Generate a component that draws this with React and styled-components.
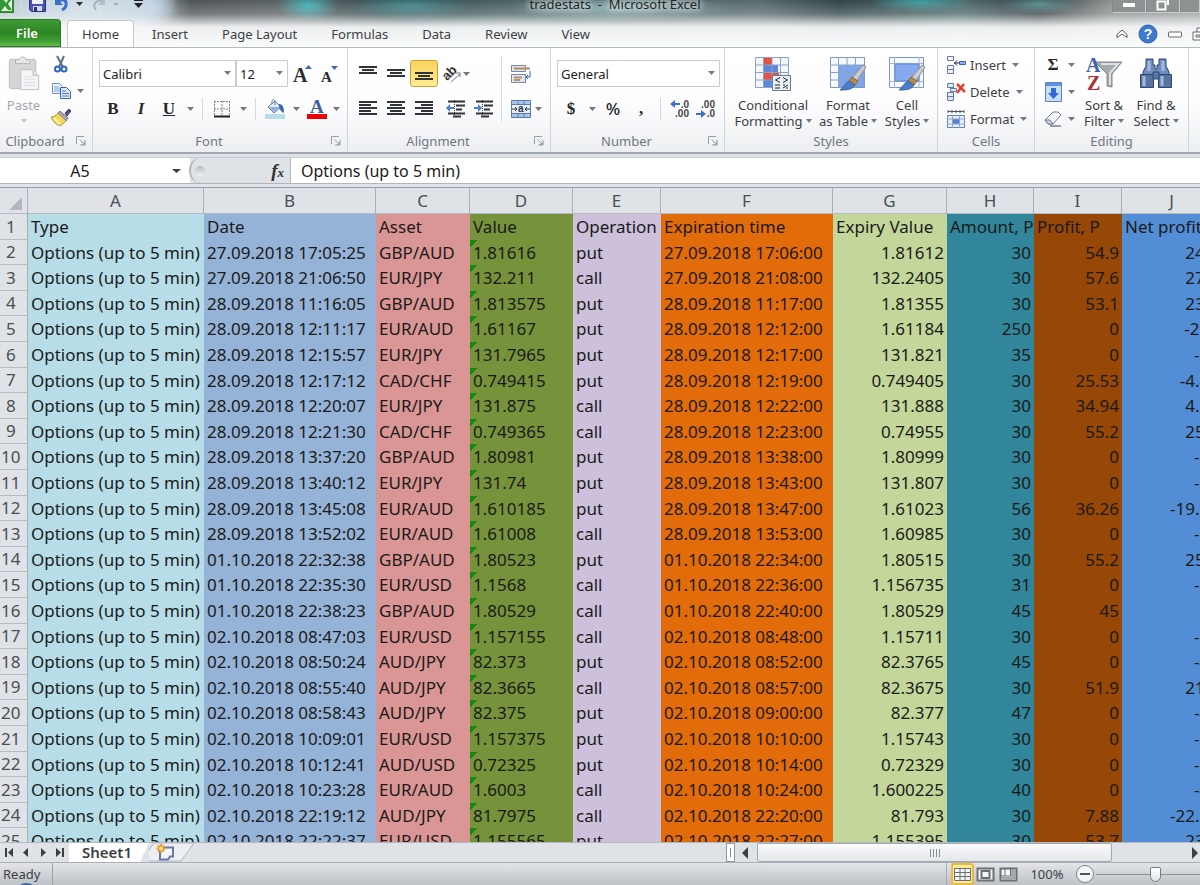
import React from 'react';
import styled, { createGlobalStyle, css } from 'styled-components';

const UiFont = '"Noto Sans", "Open Sans", sans-serif';
const CellFont = '"Noto Sans", "Open Sans", sans-serif';
const SerifFont = '"Liberation Serif", serif';
const LabelColor = '#6f7680';
const TextColor = '#3c3f44';

const GlobalStyle = createGlobalStyle`
  * {
    box-sizing: border-box;
  }
  body {
    margin: 0;
    overflow: hidden;
    background: #dfe2e7;
    font-family: ${UiFont};
    font-size: 13px;
    color: ${TextColor};
  }
  button, input, select {
    font: inherit;
    color: inherit;
    margin: 0;
    padding: 0;
    border: 0;
    background: none;
  }
  svg {
    display: block;
    flex: none;
  }
`

const Window = styled.div`
  display: flex;
  flex-direction: column;
  height: 100vh;
  overflow: hidden;
`

/* ---------- title bar and tabs ---------- */

const Header = styled.header`
  flex: none;
  overflow: hidden;
  border-bottom: 1px solid #b4b9c0;
  background:
    linear-gradient(180deg, rgba(255,255,255,0) 0, rgba(240,242,243,0.25) 14px, rgba(246,247,248,0.94) 27px, #fafbfb 47px),
    radial-gradient(ellipse 90px 40px at 90px 8px, #d3e0e8 0, rgba(200,215,226,0.8) 60%, rgba(200,215,226,0) 100%),
    radial-gradient(ellipse 26px 22px at 150px 6px, #b9d2ee 0, rgba(185,210,238,0) 100%),
    radial-gradient(ellipse 30px 16px at 308px 6px, #3fb0b4 0, rgba(63,176,180,0) 100%),
    radial-gradient(ellipse 60px 14px at 410px 6px, #3f8489 0, rgba(63,132,137,0) 100%),
    radial-gradient(ellipse 110px 14px at 620px 8px, #7fa6a8 0, rgba(127,166,168,0) 100%),
    radial-gradient(ellipse 50px 10px at 920px 2px, #3c9a9f 0, rgba(60,154,159,0) 100%),
    radial-gradient(ellipse 40px 10px at 1040px 4px, #52898c 0, rgba(82,137,140,0) 100%),
    linear-gradient(90deg, #bccad3 0, #b7c6d0 140px, #4d5355 190px, #5b6264 290px, #31494c 400px, #4b6466 520px, #57696b 760px, #2f4245 840px, #4d6a6c 960px, #353e40 1040px, #8b8f90 1110px, #9ea2a3 100%);
`

const TitleBar = styled.div`
  display: flex;
  align-items: center;
  height: 34px;
  margin-top: -14px;
  padding-top: 2px;
`

const QuickAccess = styled.div`
  display: flex;
  flex: 1;
  align-items: center;
  gap: 7px;
`

const Title = styled.h1`
  margin: 0;
  padding-left: 30px;
  font-size: 13px;
  font-weight: 400;
  white-space: pre;
  color: #1d2527;
  text-shadow: 0 0 6px #fff, 0 0 8px #fff;
`

const WindowButtons = styled.div`
  display: flex;
  flex: 1;
  justify-content: flex-end;
`

const WindowButton = styled.button`
  display: flex;
  align-items: center;
  justify-content: center;
  width: 34px;
  height: 18px;
  border: 1px solid #c9cccd;
  border-left-color: #85898b;
  background: #8c9192;
  &:last-child {
    width: 20px;
  }
`

const TabRow = styled.nav`
  display: flex;
  align-items: flex-end;
  height: 27px;
`

const FileTab = styled.button`
  width: 61px;
  height: 28px;
  margin-right: 6px;
  padding-right: 6px;
  border: 1px solid #2b7a26;
  border-left: 0;
  border-radius: 0 4px 0 0;
  background: linear-gradient(180deg, #3f9a35 0, #2c8523 50%, #3f9f33 80%, #67bb4a 100%);
  color: #fff;
  font-weight: 600;
`

const Tab = styled.button`
  height: 27px;
  padding: 0 17px;
  white-space: nowrap;
  ${({ $active }) => $active && css`
    padding: 0 14px;
    margin-right: 1px;
    border: 1px solid #c6cad0;
    border-bottom: 0;
    border-radius: 4px 4px 0 0;
    background: #fff;
  `}
`

const TabTools = styled.div`
  display: flex;
  align-items: center;
  gap: 10px;
  height: 27px;
  margin-left: auto;
  margin-right: -8px;
`

const PlainButton = styled.button`
  display: flex;
  align-items: center;
  justify-content: center;
`

/* ---------- ribbon ---------- */

const Ribbon = styled.section`
  display: flex;
  flex: none;
  height: 106px;
  border-bottom: 2px solid #a2a8b1;
  background: linear-gradient(180deg, #fff 0, #fdfdfe 55%, #eceef1 100%);
`

const Group = styled.div`
  display: flex;
  flex: none;
  flex-direction: column;
  width: ${({ $width }) => $width}px;
  border-right: 1px solid #d0d4d9;
`

const GroupBody = styled.div`
  display: flex;
  flex: 1;
  min-height: 0;
  padding-top: 8px;
  padding-left: ${({ $pad }) => $pad || 0}px;
`

const GroupFooter = styled.div`
  display: flex;
  flex: none;
  align-items: center;
  height: 22px;
  color: ${LabelColor};
  span {
    flex: 1;
    text-align: center;
  }
  button {
    width: 16px;
    margin-left: 6px;
  }
`

const Stack = styled.div`
  display: flex;
  flex-direction: column;
  margin-top: ${({ $compact }) => $compact ? -5 : 0}px;
`

const ToolRow = styled.div`
  display: flex;
  flex: none;
  align-items: center;
  height: ${({ $height }) => $height || 35}px;
`

const Tool = styled.button`
  display: flex;
  align-items: center;
  justify-content: center;
  width: ${({ $width }) => $width || 28}px;
  height: 27px;
  ${({ $active }) => $active && css`
    border: 1px solid #c9a13b;
    border-radius: 3px;
    background: linear-gradient(180deg, #fbd25e, #fde27c 60%, #ffee93);
  `}
`

const Letter = styled.span`
  font-family: ${({ $sans }) => $sans ? UiFont : SerifFont};
  font-size: 17px;
  font-weight: ${({ $sans }) => $sans ? 500 : 700};
  line-height: 20px;
  color: #26282b;
  font-style: ${({ $italic }) => $italic ? 'italic' : 'normal'};
  text-decoration: ${({ $underline }) => $underline ? 'underline' : 'none'};
`

const Divider = styled.i`
  width: 1px;
  height: ${({ $height }) => $height || 22}px;
  margin: 0 ${({ $gap }) => $gap || 0}px;
  background: #d6dade;
`

const SelectBox = styled.label`
  position: relative;
  width: ${({ $width }) => $width}px;
  svg {
    position: absolute;
    right: 5px;
    top: 11px;
    pointer-events: none;
  }
`

const Select = styled.select`
  appearance: none;
  width: 100%;
  height: 27px;
  padding-left: 3px;
  border: 1px solid #c9cdd2;
  border-radius: 0;
  background: #fff;
  color: #222;
`

const BigButton = styled.button`
  display: flex;
  flex-direction: column;
  align-items: center;
  height: 74px;
  width: ${({ $width }) => $width}px;
  line-height: 16px;
  white-space: nowrap;
  color: ${({ disabled }) => disabled ? '#a5a9ae' : TextColor};
  > svg {
    margin-bottom: 6px;
  }
  span {
    display: flex;
    align-items: center;
    gap: 3px;
    height: 16px;
  }
`

const CellsButton = styled.button`
  display: flex;
  flex: none;
  align-items: center;
  gap: 4px;
  height: 27px;
  svg:last-child {
    margin-left: 2px;
  }
`

/* ---------- formula bar ---------- */

const FormulaBar = styled.div`
  display: flex;
  flex: none;
  height: 27px;
  margin-top: 3px;
  border-top: 1px solid #c9cdd3;
  border-bottom: 1px solid #b1b6bd;
  background: #dfe2e7;
  font-family: ${CellFont};
  font-size: 16px;
  color: #1b1b1b;
`

const NameBox = styled.div`
  display: flex;
  align-items: center;
  width: 190px;
  padding-right: 9px;
  background: #fff;
  input {
    flex: 1;
    min-width: 0;
    text-align: center;
    padding-right: 12px;
  }
`

const FxArea = styled.div`
  display: flex;
  align-items: center;
  justify-content: space-between;
  width: 102px;
  margin-left: -1px;
  padding: 0 6px 0 4px;
  border: 1px solid #b4b8be;
  border-width: 0 1px 0 2px;
  border-radius: 12px 0 0 12px;
  background: #dfe2e7;
  i {
    width: 10px;
    height: 10px;
    border-radius: 5px;
    background: linear-gradient(180deg, #b6bac0, #f1f2f4);
  }
  button {
    font-family: ${SerifFont};
    font-size: 19px;
    font-style: italic;
    font-weight: 700;
    color: #333;
  }
  sub {
    font-size: 13px;
    vertical-align: baseline;
  }
`

const FormulaInput = styled.input`
  flex: 1;
  min-width: 0;
  padding-left: 10px;
  background: #fff;
`

/* ---------- sheet ---------- */

const Sheet = styled.div`
  flex: 1;
  min-height: 0;
  margin-top: 3px;
  overflow: hidden;
  border-top: 1px solid #9aa0a9;
`

const Grid = styled.table`
  width: 1222px;
  table-layout: fixed;
  border-collapse: separate;
  border-spacing: 0;
  font-family: ${CellFont};
  font-size: 17px;
  line-height: 24px;
  color: #1a1a1a;
  th {
    padding: 0;
    overflow: hidden;
    font-weight: 400;
    color: #4b4e53;
    background: #dfe2e7;
    border-right: 1px solid #a9aeb5;
    border-bottom: 1px solid #b6bac1;
  }
`

const Row = styled.tr`
  height: 26px;
  &:nth-child(5n + 2), &:nth-child(5n + 4) {
    height: 25px;
  }
`

const RowHead = styled.th`
  text-align: left;
  text-indent: ${({ $wide }) => $wide ? 1 : 6}px;
`

const Cell = styled.td`
  padding: 0 3px;
  white-space: nowrap;
  text-align: ${({ $align }) => $align};
  background-color: ${({ $color }) => $color};
  ${({ $flag }) => $flag && css`
    background-image: linear-gradient(135deg, #128a12 5px, transparent 5px);
  `}
`

const Corner = styled.th`
  svg {
    margin: 5px 0 0 9px;
  }
`

/* ---------- bottom bars ---------- */

const SheetBar = styled.div`
  display: flex;
  flex: none;
  height: 20px;
  border-top: 1px solid #b3b8bf;
  background: #dfe2e7;
`

const SheetTabs = styled.div`
  display: flex;
  flex: 726;
`

const SheetNav = styled.div`
  display: flex;
  width: 69px;
  button {
    width: 18px;
  }
`

const SheetTab = styled.button`
  width: 80px;
  padding-right: 4px;
  font-size: 15px;
  font-weight: 600;
  line-height: 19px;
  background: #fff;
  clip-path: polygon(0 0, 100% 0, calc(100% - 9px) 100%, 0 100%);
`

const ScrollArea = styled.div`
  display: flex;
  flex: 474;
  align-items: stretch;
`

const Splitter = styled.button`
  width: 9px;
  border: 1px solid #92979e;
  background: #fff;
  &::after {
    content: '';
    display: block;
    width: 1px;
    height: 9px;
    margin: 0 auto;
    background: #888;
  }
`

const ScrollTrack = styled.div`
  display: flex;
  flex: 1;
`

const ScrollThumb = styled.button`
  display: flex;
  flex: 0 0 82%;
  align-items: center;
  justify-content: center;
  gap: 2px;
  border: 1px solid #a3a8b0;
  border-radius: 2px;
  background: linear-gradient(180deg, #fafbfc, #e4e7eb);
  i {
    width: 1px;
    height: 8px;
    background: #888d94;
  }
`

const StatusBar = styled.footer`
  position: relative;
  display: flex;
  flex: none;
  align-items: center;
  height: 23px;
  overflow: hidden;
  border-top: 1px solid #a9aeb6;
  background: linear-gradient(180deg, #e3e5e9 0, #cfd2d6 50%, #bfc3c8 100%);
`

const Ready = styled.span`
  width: 53px;
  padding-left: 3px;
  line-height: 22px;
  border-right: 1px solid #9ca1a8;
`

const Orb = styled.i`
  position: absolute;
  left: 15px;
  top: 20px;
  width: 23px;
  height: 23px;
  border: 2px solid #3a6ea0;
  border-radius: 50%;
  background: #a8d0ea;
`

const ViewTools = styled.div`
  display: flex;
  align-items: center;
  height: 22px;
  margin-left: auto;
  margin-right: -14px;
  padding-left: 4px;
  border-left: 1px solid #a6abb2;
  label {
    display: flex;
  }
`

const ViewButton = styled.button`
  display: flex;
  align-items: center;
  justify-content: center;
  width: 23px;
  height: 22px;
  border-radius: 3px;
  ${({ $active }) => $active && css`
    border: 2px solid #e9bb3c;
    background: #fdeb9c;
  `}
`

const Zoom = styled.span`
  width: 54px;
  text-align: center;
`

const ZoomSlider = styled.input`
  appearance: none;
  width: 118px;
  height: 22px;
  background: linear-gradient(#8a8f96, #8a8f96) 0 11px / 100% 1px no-repeat;
  &::-webkit-slider-thumb {
    appearance: none;
    width: 11px;
    height: 15px;
    background: linear-gradient(180deg, #fff, #e1e3e6);
    border: 1px solid #767b82;
    border-radius: 2px 2px 6px 6px;
  }
`

/* ---------- icons ---------- */

const Caret = ({ size = 7, color = '#74787e' }) => (
  <svg width={size} height="4" viewBox="0 0 8 4" preserveAspectRatio="none"><path d="M0 0h8L4 4z" fill={color} /></svg>
)

const Launcher = () => (
  <svg width="10" height="10" viewBox="0 0 10 10" fill="none" stroke="#9a9fa7">
    <path d="M.5 8V.5H8" />
    <path d="M3.5 3.5l4 4M9 4v5H4" />
    <path d="M9 5.500v3.500H5.500z" fill="#9a9fa7" stroke="none" />
  </svg>
)

const ExcelIcon = () => (
  <svg width="14" height="18" viewBox="0 0 14 18">
    <path d="M0 1h13v16H0z" fill="#e9f5e4" stroke="#2c8a2c" strokeWidth="2" />
    <path d="M0 4h3l3 4 3-4h3l-4 5 4 6H8l-3-4-3 4H0z" fill="#2f9a33" />
  </svg>
)

const SaveIcon = () => (
  <svg width="17" height="16" viewBox="0 0 17 16">
    <path d="M.5.5h16v15h-14l-2-2z" fill="#4b50b8" stroke="#2c2f86" />
    <path d="M3 1h11v7H3z" fill="#eef1fb" />
    <path d="M4 10h9v5H4z" fill="#d5d9ee" />
    <path d="M5 11h3v4H5z" fill="#2c2f86" />
  </svg>
)

const UndoIcon = () => (
  <svg width="16" height="16" viewBox="0 0 16 16">
    <path d="M2 1v8h8z" fill="#3a6fc6" />
    <path d="M5 6c4-4 9-2 8 3 0 2-2 4-4 5" fill="none" stroke="#3a6fc6" strokeWidth="3" />
  </svg>
)

const RedoIcon = () => (
  <svg width="29" height="16" viewBox="0 0 29 16">
    <path d="M6 14C2 9 6 3 13 5" fill="none" stroke="#a9b2ba" strokeWidth="2" />
    <path d="M15 1v8H8z" fill="#b4bcc4" />
    <path d="M23 7h6l-3 3z" fill="#a9b2ba" />
  </svg>
)

const PasteIcon = () => (
  <svg width="34" height="35" viewBox="0 0 34 37">
    <rect x="1.500" y="3.500" width="28" height="31" rx="2" fill="#d6d5d8" stroke="#bdbcc0" />
    <path d="M8 8V4h4c0-4 7-4 7 0h4v4z" fill="#e7e7e9" stroke="#b3b3b8" />
    <path d="M13.500 14.500h13l6 6v15h-19z" fill="#f5f5f7" stroke="#bcbcc2" />
    <path d="M26.500 14.500v6h6" fill="#e4e4e8" stroke="#bcbcc2" />
    <path d="M17 22h11M17 25h12M17 28h12M17 31h12" stroke="#dedee3" />
  </svg>
)

const CutIcon = () => (
  <svg width="16" height="18" viewBox="0 0 16 18" fill="none">
    <path d="M4 1l6 11M11 1L6 12" stroke="#5f7187" strokeWidth="2" />
    <ellipse cx="4.500" cy="14" rx="2.500" ry="2.500" stroke="#2f66ba" strokeWidth="2" />
    <ellipse cx="11" cy="14" rx="2.500" ry="2.500" stroke="#2f66ba" strokeWidth="2" />
  </svg>
)

const CopyIcon = () => (
  <svg width="19" height="16" viewBox="0 0 19 16">
    <path d="M.5.5h7l3 3v7H.5z" fill="#eaf2fc" stroke="#6f95c8" />
    <path d="M2 4h5M2 6h6M2 8h6" stroke="#7fa4d8" />
    <path d="M8.500 4.500h6l4 4v7h-10z" fill="#dbe8fa" stroke="#3d68ab" />
    <path d="M10 8h4M10 10.500h7M10 13h7" stroke="#4d7cc4" />
  </svg>
)

const BrushIcon = () => (
  <svg width="20" height="18" viewBox="0 0 20 18">
    <path d="M14 5l4-4 2 2-4 5z" fill="#584a86" stroke="#463b6e" />
    <path d="M9 3l8 7-2 3-8-8z" fill="#a9a3b8" stroke="#77718c" />
    <path d="M7 5l8 8-6 5C6 17 2 14 0 9c2 0 5-1 7-4z" fill="#f1d862" stroke="#b3943a" />
    <path d="M3 10l6 6" stroke="#fbf0b0" strokeWidth="2" />
  </svg>
)

const GrowIcon = ({ small }) => (
  <svg width="20" height="20" viewBox="0 0 20 20">
    <text x="1" y="18" fontFamily="Liberation Serif" fontWeight="700" fontSize={small ? 15 : 20} fill="#2b2d31">A</text>
    {small
      ? <path d="M11 2h7l-3.500 4z" fill="#3f69b8" />
      : <path d="M13 5h7l-3.500-4z" fill="#3f69b8" />}
  </svg>
)

const BorderIcon = () => (
  <svg width="18" height="18" viewBox="0 0 18 18" fill="none" stroke="#7c8086">
    <path d="M1.500 1v15M9 1v15M16.500 1v15M1 1.500h16M1 9h16" strokeDasharray="2 1" />
    <path d="M1 16.500h16" stroke="#222" strokeWidth="2" />
  </svg>
)

const FillIcon = () => (
  <svg width="20" height="20" viewBox="0 0 20 20">
    <path d="M0 15h20v5H0z" fill="#b7dee8" />
    <path d="M3 8l7-6 6 6-7 6z" fill="#e4edf7" stroke="#5e7ba3" />
    <path d="M7 5C6 0 10-1 10 3v3" fill="none" stroke="#6b7c93" />
    <path d="M14 5c4 0 5 4 5 9-3-1-4-4-5-5z" fill="#3766b4" />
    <path d="M4 8h11l-6 5z" fill="#8fb0dc" />
  </svg>
)

const FontColorIcon = () => (
  <svg width="20" height="20" viewBox="0 0 20 20">
    <text x="3" y="14" fontFamily="Liberation Serif" fontWeight="700" fontSize="19" fill="#3d5f9f">A</text>
    <path d="M0 15h20v5H0z" fill="#f00000" />
  </svg>
)

// lines: [x, width] pairs, drawn three pixels apart
const LinesIcon = ({ lines }) => (
  <svg width="18" height="16" viewBox="0 0 18 16">
    {lines.map(([x, w], i) => <rect key={i} x={x} y={i * 3} width={w} height="2" fill="#303338" />)}
  </svg>
)

const IndentIcon = ({ out }) => (
  <svg width="20" height="18" viewBox="0 0 20 18">
    <path d="M2 1.500h17M10 5.500h9M10 9.500h6M2 13.500h17M7 16.500h8" stroke="#303338" strokeWidth="2" />
    <path d="M8.500 0v18" stroke="#303338" strokeDasharray="1 1" />
    <path d={out ? 'M0 8l4-4v3h4v2H4v3z' : 'M8 8L4 4v3H0v2h4v3z'} fill="#4a7dd6" />
  </svg>
)

const OrientationIcon = () => (
  <svg width="20" height="18" viewBox="0 0 20 18">
    <text x="0" y="13" fontFamily="Liberation Sans" fontWeight="700" fontSize="13" fill="#333" transform="rotate(-45 6 10)">ab</text>
    <path d="M8 17l9-8M13 8h4v4" fill="none" stroke="#777" />
  </svg>
)

const WrapIcon = () => (
  <svg width="20" height="18" viewBox="0 0 20 18">
    <path d="M.5.5h14v6H.5z" fill="#dce7f5" stroke="#7489a8" />
    <path d="M3 3.500h16" stroke="#b98a4e" strokeWidth="2" />
    <path d="M.5 9.500h14v8H.5z" fill="#dce7f5" stroke="#7489a8" />
    <path d="M3 12.500h8M3 15h6" stroke="#c2905a" strokeWidth="2" />
    <path d="M19 6v6h-3M17 10l-2 2 2 2" fill="none" stroke="#3e67b0" />
  </svg>
)

const MergeIcon = () => (
  <svg width="20" height="18" viewBox="0 0 20 18">
    <path d="M.5.5h19v17H.5z" fill="#a9c6ec" stroke="#5c7ba8" />
    <path d="M0 4.500h20M0 13.500h20M7 0v5M13 0v5M7 13v5M13 13v5" stroke="#5c7ba8" />
    <path d="M1 5h18v8H1z" fill="#e7f0fb" />
    <path d="M1 9h5M19 9h-5M4 7l2 2-2 2M16 7l-2 2 2 2" fill="none" stroke="#27364d" />
    <text x="7" y="12" fontFamily="Liberation Sans" fontWeight="700" fontSize="10" fill="#27364d">a</text>
  </svg>
)

const DecimalIcon = ({ more }) => (
  <svg width="20" height="18" viewBox="0 0 20 18">
    <text x="19" y="8" textAnchor="end" fontFamily="Liberation Sans" fontWeight="700" fontSize="10" fill="#444">{more ? '.0' : '.00'}</text>
    <text x="19" y="17" textAnchor="end" fontFamily="Liberation Sans" fontWeight="700" fontSize="10" fill="#444">{more ? '.00' : '.0'}</text>
    <path d={more ? 'M0 4l5-4v3h5v2H5v3z' : 'M10 14l-5-4v3H0v2h5v3z'} fill="#3e70cf" />
  </svg>
)

const PaintBrush = () => (
  <g>
    <path d="M34 9l3 2-9 14-5-3z" fill="#c8ccd0" stroke="#888d94" />
    <path d="M23 21l6 4-3 4-6-4z" fill="#b98b4b" stroke="#8b6633" />
    <path d="M20 25l6 4c-3 5-9 5-15 5 4-3 5-7 9-9z" fill="#4b7dc9" stroke="#3762a6" />
  </g>
)

const ConditionalIcon = () => (
  <svg width="38" height="35" viewBox="0 0 38 35">
    <path d="M1.500 1.500h33v30h-33z" fill="#f3f7fd" stroke="#8aa3c8" />
    <path d="M10 2h8v7h-8zM10 17h15v7H10z" fill="#e8503f" />
    <path d="M10 9h14v7H10zM10 24h8v7h-8z" fill="#5b87dc" />
    <path d="M1 9h34M1 16.500h34M1 24h34M9.500 1v31M18 1v31M26.500 1v31" stroke="#8aa3c8" fill="none" />
    <path d="M18.500 19.500h18v15h-18z" fill="#e9eff7" stroke="#687b96" />
    <path d="M26 21.500L21.500 24l4.500 2.500M21 29h5M21 32h5M29 21.500l4.500 2.500-4.500 2.500M29 32l5-3M29 29h2M32 32h2" stroke="#222" fill="none" />
  </svg>
)

const FormatTableIcon = () => (
  <svg width="38" height="35" viewBox="0 0 38 35">
    <path d="M1.500 1.500h34v30h-34z" fill="#f6f9fe" stroke="#7e99c0" />
    <path d="M10 9h25v22H10z" fill="#7fa6ea" />
    <path d="M1 9h34M1 16.500h34M1 24h34M9.500 1v31M18 1v31M26.500 1v31" stroke="#8aa3c8" fill="none" />
    <PaintBrush />
  </svg>
)

const CellStyleIcon = () => (
  <svg width="38" height="35" viewBox="0 0 38 35">
    <path d="M1.500 1.500h34v30h-34z" fill="#f6f9fe" stroke="#7e99c0" />
    <path d="M1 7.500h34M1 25.500h34M6.500 1v31M31 1v31" stroke="#9fb4d2" />
    <path d="M7 8h24v17H7z" fill="#86aaf0" stroke="#5f86cf" />
    <PaintBrush />
  </svg>
)

const InsertIcon = () => (
  <svg width="20" height="18" viewBox="0 0 20 18">
    <path d="M1.500.5h6v4h-6zM1.500 9.500h6v4h-6zM1.500 13.500h6v4h-6z" fill="#f3f7fd" stroke="#627ba0" />
    <path d="M8 7h6M11 4.500L8.500 7l2.500 2.500" fill="none" stroke="#222" />
    <path d="M13.500 5.500h6v3h-6z" fill="#8db4f0" stroke="#3a64ac" />
  </svg>
)

const DeleteIcon = () => (
  <svg width="20" height="18" viewBox="0 0 20 18">
    <path d="M1.500.5h6v4h-6zM1.500 9.500h6v4h-6zM1.500 13.500h6v4h-6zM4.500 5.500h6v3h-6z" fill="#dfe9f7" stroke="#627ba0" />
    <path d="M11 1l8 8M18 1l-7 9" stroke="#e2412e" strokeWidth="2.500" />
  </svg>
)

const FormatIcon = () => (
  <svg width="20" height="20" viewBox="0 0 20 20">
    <path d="M2 1v3M6 1v3M10 1v3M14 1v3M18 1v3M2 2.500h16" stroke="#4d5866" />
    <path d="M1.500 6.500h17v12h-17z" fill="#e7f0fc" stroke="#6884ad" />
    <path d="M7 10h6v5H7z" fill="#4f80d8" />
    <path d="M1 10h18M1 15h18M6.500 6v13M13.500 6v13" stroke="#8da6cb" />
  </svg>
)

const FillDownIcon = () => (
  <svg width="17" height="20" viewBox="0 0 17 20">
    <path d="M.5.5h16v19H.5z" fill="#c9defa" stroke="#5d83bd" />
    <path d="M1 1h15v3H1z" fill="#5f92e2" />
    <path d="M6 6h5v5h3l-5.500 6L3 11h3z" fill="#2f6bd0" />
  </svg>
)

const EraserIcon = () => (
  <svg width="18" height="16" viewBox="0 0 18 16">
    <path d="M1 9l8-8h5l3 3-8 9H4z" fill="#f5f6f9" stroke="#6b7890" />
    <path d="M1 9l3 4h5l-3-4z" fill="#cfd6e2" stroke="#6b7890" />
    <path d="M6 15h11" stroke="#444" />
  </svg>
)

const SortIcon = () => (
  <svg width="38" height="35" viewBox="0 0 38 35">
    <path d="M10 6h27L27 18v13l-5-1V18z" fill="#a6a9ae" stroke="#82868c" />
    <path d="M16 8h17l-8 9v12" fill="none" stroke="#dcdee1" strokeWidth="2" />
    <text x="1" y="16" fontFamily="Liberation Serif" fontWeight="700" fontSize="20" fill="#3c63ad">A</text>
    <text x="2" y="34" fontFamily="Liberation Serif" fontWeight="700" fontSize="20" fill="#a8323a">Z</text>
  </svg>
)

const FindIcon = () => (
  <svg width="36" height="35" viewBox="0 0 36 35" stroke="#2f4770">
    <path d="M8 3h7v6h2v4h2V9h2V3h7v7l3 6v3H5v-3l3-6z" fill="#6d8cbd" />
    <path d="M2.500 18.500h13v13h-13zM20.500 18.500h13v13h-13z" fill="#55759f" />
    <path d="M15 16h6v7h-6z" fill="#5a78a5" />
    <path d="M6 20v10M24 20v10M11 5v10M25 5v10" stroke="#a3bade" strokeWidth="3" />
  </svg>
)

const NavIcon = ({ flip, end }) => (
  <svg width="10" height="9" viewBox="0 0 10 9" transform={flip ? 'scale(-1 1)' : undefined}>
    <path d={end ? 'M1 0h2v9H1zM9 0v9L4 4.500z' : 'M7 0v9L2 4.500z'} fill="#3b3f45" />
  </svg>
)

const NewSheetIcon = () => (
  <svg width="46" height="19" viewBox="0 0 46 19">
    <path d="M5 0h40L32 18H-8z" fill="#eceef1" stroke="#b0b5bc" />
    <path d="M11 4.500h13v9h-3l-2 3h-8z" fill="#f4f6fb" stroke="#6877a8" strokeWidth="2" />
    <path d="M12 1v9M7.500 5.500h9M9 2.500l6 6M15 2.500l-6 6" stroke="#e79a2e" strokeWidth="2" />
    <circle cx="12" cy="5.500" r="2" fill="#fbe08a" />
  </svg>
)

const ViewIcon = ({ kind }) => (
  <svg width="19" height="15" viewBox="0 0 19 15" fill="none" stroke="#6b7077">
    <path d="M1.500 1.500h16v12h-16z" fill="#f4f5f7" strokeWidth={kind === 'normal' ? 1 : 2} />
    {kind === 'normal' && <path d="M1 5.500h17M1 9.500h17M7 1v13M12 1v13" />}
    {kind === 'layout' && <path d="M5.500 4h8v7h-8z" strokeWidth="2" />}
    {kind === 'break' && <path d="M2 10h15v3H2zM12 2h5v8h-5z" fill="#a5a9af" stroke="none" />}
    {kind === 'break' && <path d="M6 1v8M11.500 1v8H2" />}
  </svg>
)

/* ---------- data ---------- */

const columns = [
  { name: 'A', width: 176, color: '#b7dee8' },
  { name: 'B', width: 172, color: '#95b3d7' },
  { name: 'C', width: 94, color: '#da9694' },
  { name: 'D', width: 103, color: '#76933c' },
  { name: 'E', width: 88, color: '#ccc0da' },
  { name: 'F', width: 172, color: '#e26b0a' },
  { name: 'G', width: 114, color: '#c4d79b', align: 'right' },
  { name: 'H', width: 87, color: '#31869b', align: 'right' },
  { name: 'I', width: 88, color: '#974706', align: 'right' },
  { name: 'J', width: 100, color: '#538dd5', align: 'right' },
]

const titles = ['Type', 'Date', 'Asset', 'Value', 'Operation', 'Expiration time', 'Expiry Value', 'Amount, P', 'Profit, P', 'Net profit, P']

const trades = [
  ['27.09.2018 17:05:25', 'GBP/AUD', '1.81616', 'put', '27.09.2018 17:06:00', '1.81612', '30', '54.9', '24.9'],
  ['27.09.2018 21:06:50', 'EUR/JPY', '132.211', 'call', '27.09.2018 21:08:00', '132.2405', '30', '57.6', '27.6'],
  ['28.09.2018 11:16:05', 'GBP/AUD', '1.813575', 'put', '28.09.2018 11:17:00', '1.81355', '30', '53.1', '23.1'],
  ['28.09.2018 12:11:17', 'EUR/AUD', '1.61167', 'put', '28.09.2018 12:12:00', '1.61184', '250', '0', '-250'],
  ['28.09.2018 12:15:57', 'EUR/JPY', '131.7965', 'put', '28.09.2018 12:17:00', '131.821', '35', '0', '-35'],
  ['28.09.2018 12:17:12', 'CAD/CHF', '0.749415', 'put', '28.09.2018 12:19:00', '0.749405', '30', '25.53', '-4.47'],
  ['28.09.2018 12:20:07', 'EUR/JPY', '131.875', 'call', '28.09.2018 12:22:00', '131.888', '30', '34.94', '4.94'],
  ['28.09.2018 12:21:30', 'CAD/CHF', '0.749365', 'call', '28.09.2018 12:23:00', '0.74955', '30', '55.2', '25.2'],
  ['28.09.2018 13:37:20', 'GBP/AUD', '1.80981', 'put', '28.09.2018 13:38:00', '1.80999', '30', '0', '-30'],
  ['28.09.2018 13:40:12', 'EUR/JPY', '131.74', 'put', '28.09.2018 13:43:00', '131.807', '30', '0', '-30'],
  ['28.09.2018 13:45:08', 'EUR/AUD', '1.610185', 'put', '28.09.2018 13:47:00', '1.61023', '56', '36.26', '-19.74'],
  ['28.09.2018 13:52:02', 'EUR/AUD', '1.61008', 'call', '28.09.2018 13:53:00', '1.60985', '30', '0', '-30'],
  ['01.10.2018 22:32:38', 'GBP/AUD', '1.80523', 'put', '01.10.2018 22:34:00', '1.80515', '30', '55.2', '25.2'],
  ['01.10.2018 22:35:30', 'EUR/USD', '1.1568', 'call', '01.10.2018 22:36:00', '1.156735', '31', '0', '-31'],
  ['01.10.2018 22:38:23', 'GBP/AUD', '1.80529', 'call', '01.10.2018 22:40:00', '1.80529', '45', '45', '0'],
  ['02.10.2018 08:47:03', 'EUR/USD', '1.157155', 'call', '02.10.2018 08:48:00', '1.15711', '30', '0', '-30'],
  ['02.10.2018 08:50:24', 'AUD/JPY', '82.373', 'put', '02.10.2018 08:52:00', '82.3765', '45', '0', '-45'],
  ['02.10.2018 08:55:40', 'AUD/JPY', '82.3665', 'call', '02.10.2018 08:57:00', '82.3675', '30', '51.9', '21.9'],
  ['02.10.2018 08:58:43', 'AUD/JPY', '82.375', 'put', '02.10.2018 09:00:00', '82.377', '47', '0', '-47'],
  ['02.10.2018 10:09:01', 'EUR/USD', '1.157375', 'put', '02.10.2018 10:10:00', '1.15743', '30', '0', '-30'],
  ['02.10.2018 10:12:41', 'AUD/USD', '0.72325', 'put', '02.10.2018 10:14:00', '0.72329', '30', '0', '-30'],
  ['02.10.2018 10:23:28', 'EUR/AUD', '1.6003', 'call', '02.10.2018 10:24:00', '1.600225', '40', '0', '-40'],
  ['02.10.2018 22:19:12', 'AUD/JPY', '81.7975', 'call', '02.10.2018 22:20:00', '81.793', '30', '7.88', '-22.12'],
  ['02.10.2018 22:22:37', 'EUR/USD', '1.155565', 'put', '02.10.2018 22:27:00', '1.155395', '30', '53.7', '23.7'],
]

const rows = [titles, ...trades.map(trade => ['Options (up to 5 min)', ...trade])]

const tabs = ['Home', 'Insert', 'Page Layout', 'Formulas', 'Data', 'Review', 'View']

/* ---------- parts ---------- */

const RibbonGroup = ({ title, width, pad, launcher, children }) => (
  <Group $width={width}>
    <GroupBody $pad={pad}>{children}</GroupBody>
    <GroupFooter>
      <span>{title}</span>
      {launcher && <button aria-label={title + ' options'}><Launcher /></button>}
    </GroupFooter>
  </Group>
)

const Dropdown = ({ label, value, width }) => (
  <SelectBox $width={width}>
    <Select aria-label={label} defaultValue={value}><option>{value}</option></Select>
    <Caret />
  </SelectBox>
)

const CaretTool = ({ label, width = 14 }) => (
  <Tool $width={width} aria-label={label}><Caret /></Tool>
)

const BigTool = ({ icon, lines, width, disabled }) => (
  <BigButton $width={width} disabled={disabled}>
    {icon}
    <span>{lines[0]}</span>
    <span>{lines[1]}<Caret size={6} color={disabled ? '#c3c6ca' : undefined} /></span>
  </BigButton>
)

const TopHeader = () => (
  <Header>
    <TitleBar>
      <QuickAccess>
        <ExcelIcon />
        <Divider />
        <PlainButton aria-label="Save"><SaveIcon /></PlainButton>
        <PlainButton aria-label="Undo"><UndoIcon /></PlainButton>
        <Caret color="#2b2d30" />
        <PlainButton aria-label="Redo"><RedoIcon /></PlainButton>
        <Divider />
        <PlainButton aria-label="Customize">
          <svg width="9" height="8" viewBox="0 0 9 8"><path d="M0 0h9v1H0zM0 3h9L4.500 8z" fill="#222" /></svg>
        </PlainButton>
      </QuickAccess>
      <Title>{'tradestats  -  Microsoft Excel'}</Title>
      <WindowButtons>
        <WindowButton aria-label="Minimize">
          <svg width="12" height="12" viewBox="0 0 12 12"><path d="M0 5h12v4H0z" fill="#fff" /></svg>
        </WindowButton>
        <WindowButton aria-label="Restore">
          <svg width="14" height="14" viewBox="0 0 14 14"><path d="M5 1h7v7M1.500 4.500h8v8h-8z" fill="none" stroke="#fff" strokeWidth="2" /></svg>
        </WindowButton>
        <WindowButton aria-label="Close" />
      </WindowButtons>
    </TitleBar>
    <TabRow>
      <FileTab>File</FileTab>
      {tabs.map(tab => <Tab key={tab} $active={tab === 'Home'}>{tab}</Tab>)}
      <TabTools>
        <PlainButton aria-label="Minimize ribbon">
          <svg width="12" height="10" viewBox="0 0 12 10" fill="#fff" stroke="#555a60"><path d="M1 5.500L6 1l5 4.500v3L6 5 1 8.500z" /></svg>
        </PlainButton>
        <PlainButton aria-label="Help">
          <svg width="20" height="20" viewBox="0 0 20 20">
            <circle cx="10" cy="10" r="9" fill="#3f7ad0" stroke="#2d5fae" />
            <text x="10" y="15" textAnchor="middle" fontFamily="Liberation Sans" fontWeight="700" fontSize="14" fill="#fff">?</text>
          </svg>
        </PlainButton>
        <PlainButton aria-label="Minimize workbook">
          <svg width="14" height="8" viewBox="0 0 14 8"><rect x=".5" y="2" width="13" height="5" rx="1" fill="#fff" stroke="#63676d" /></svg>
        </PlainButton>
        <PlainButton aria-label="Restore workbook">
          <svg width="16" height="14" viewBox="0 0 16 14" fill="#fff" stroke="#63676d"><path d="M5 1h9v8H5z" /><path d="M1 5h9v8H1zM4 8h4v2H4z" /></svg>
        </PlainButton>
      </TabTools>
    </TabRow>
  </Header>
)

const RibbonBar = () => (
  <Ribbon>
    <RibbonGroup title="Clipboard" width={93} launcher>
      <BigTool width={47} disabled icon={<PasteIcon />} lines={['Paste', '']} />
      <Stack $compact>
        <Tool aria-label="Cut"><CutIcon /></Tool>
        <ToolRow $height={27}>
          <Tool aria-label="Copy"><CopyIcon /></Tool>
          <CaretTool label="Copy menu" width={10} />
        </ToolRow>
        <Tool aria-label="Format painter"><BrushIcon /></Tool>
      </Stack>
    </RibbonGroup>

    <RibbonGroup title="Font" width={255} pad={6} launcher>
      <Stack>
        <ToolRow>
          <Dropdown label="Font" value="Calibri" width={137} />
          <Dropdown label="Font size" value="12" width={52} />
          <Tool aria-label="Grow font"><GrowIcon /></Tool>
          <Tool aria-label="Shrink font"><GrowIcon small /></Tool>
        </ToolRow>
        <ToolRow>
          <Tool aria-label="Bold"><Letter>B</Letter></Tool>
          <Tool aria-label="Italic"><Letter $italic>I</Letter></Tool>
          <Tool aria-label="Underline"><Letter $underline>U</Letter></Tool>
          <CaretTool label="Underline menu" />
          <Divider $gap={5} />
          <Tool aria-label="Borders"><BorderIcon /></Tool>
          <CaretTool label="Borders menu" />
          <Divider $gap={5} />
          <Tool aria-label="Fill color"><FillIcon /></Tool>
          <CaretTool label="Fill menu" />
          <Tool aria-label="Font color"><FontColorIcon /></Tool>
          <CaretTool label="Font color menu" width={10} />
        </ToolRow>
      </Stack>
    </RibbonGroup>

    <RibbonGroup title="Alignment" width={203} pad={6} launcher>
      <Stack>
        <ToolRow>
          <Tool aria-label="Top align"><LinesIcon lines={[[0, 18], [3, 12], [0, 18]]} /></Tool>
          <Tool aria-label="Middle align"><LinesIcon lines={[[0, 0], [0, 18], [3, 12], [0, 18]]} /></Tool>
          <Tool $active aria-label="Bottom align"><LinesIcon lines={[[0, 0], [0, 0], [0, 18], [3, 12], [0, 18]]} /></Tool>
          <Tool $width={36} aria-label="Orientation"><OrientationIcon /><Caret /></Tool>
        </ToolRow>
        <ToolRow>
          <Tool aria-label="Align left"><LinesIcon lines={[[0, 18], [0, 12], [0, 18], [0, 12], [0, 18]]} /></Tool>
          <Tool aria-label="Center"><LinesIcon lines={[[0, 18], [3, 12], [0, 18], [3, 12], [0, 18]]} /></Tool>
          <Tool aria-label="Align right"><LinesIcon lines={[[0, 18], [6, 12], [0, 18], [6, 12], [0, 18]]} /></Tool>
          <Tool $width={36} aria-label="Decrease indent"><IndentIcon out /></Tool>
          <Tool $width={20} aria-label="Increase indent"><IndentIcon /></Tool>
        </ToolRow>
      </Stack>
      <Divider $height={66} $gap={7} />
      <Stack>
        <ToolRow><Tool $width={24} aria-label="Wrap text"><WrapIcon /></Tool></ToolRow>
        <ToolRow>
          <Tool $width={24} aria-label="Merge cells"><MergeIcon /></Tool>
          <CaretTool label="Merge menu" width={10} />
        </ToolRow>
      </Stack>
    </RibbonGroup>

    <RibbonGroup title="Number" width={174} pad={6} launcher>
      <Stack>
        <ToolRow><Dropdown label="Number format" value="General" width={163} /></ToolRow>
        <ToolRow>
          <Tool aria-label="Currency"><Letter>$</Letter></Tool>
          <CaretTool label="Currency menu" />
          <Tool aria-label="Percent"><Letter $sans>%</Letter></Tool>
          <Tool aria-label="Comma"><Letter>,</Letter></Tool>
          <Divider $gap={5} />
          <Tool aria-label="Increase decimal"><DecimalIcon more /></Tool>
          <Tool $width={24} aria-label="Decrease decimal"><DecimalIcon /></Tool>
        </ToolRow>
      </Stack>
    </RibbonGroup>

    <RibbonGroup title="Styles" width={213} pad={5}>
      <BigTool width={86} icon={<ConditionalIcon />} lines={['Conditional', 'Formatting']} />
      <BigTool width={64} icon={<FormatTableIcon />} lines={['Format', 'as Table']} />
      <BigTool width={54} icon={<CellStyleIcon />} lines={['Cell', 'Styles']} />
    </RibbonGroup>

    <RibbonGroup title="Cells" width={97} pad={8}>
      <Stack $compact>
        <CellsButton><InsertIcon />Insert<Caret /></CellsButton>
        <CellsButton><DeleteIcon />Delete<Caret /></CellsButton>
        <CellsButton><FormatIcon />Format<Caret /></CellsButton>
      </Stack>
    </RibbonGroup>

    <RibbonGroup title="Editing" width={154} pad={4}>
      <Stack $compact>
        <ToolRow $height={27}><Tool aria-label="Sum"><Letter>Σ</Letter></Tool><CaretTool label="Sum menu" width={8} /></ToolRow>
        <ToolRow $height={27}><Tool aria-label="Fill down"><FillDownIcon /></Tool><CaretTool label="Fill down menu" width={8} /></ToolRow>
        <ToolRow $height={27}><Tool aria-label="Clear"><EraserIcon /></Tool><CaretTool label="Clear menu" width={8} /></ToolRow>
      </Stack>
      <BigTool width={58} icon={<SortIcon />} lines={['Sort &', 'Filter']} />
      <BigTool width={46} icon={<FindIcon />} lines={['Find &', 'Select']} />
    </RibbonGroup>
  </Ribbon>
)

const SheetGrid = () => (
  <Sheet>
    <Grid>
      <colgroup>
        <col width="28" />
        {columns.map(col => <col key={col.name} width={col.width} />)}
      </colgroup>
      <thead>
        <Row>
          <Corner aria-label="Select all">
            <svg width="13" height="13" viewBox="0 0 13 13"><path d="M13 0v13H0z" fill="#b3b8c0" /></svg>
          </Corner>
          {columns.map(col => <th key={col.name}>{col.name}</th>)}
        </Row>
      </thead>
      <tbody>
        {rows.map((row, r) => (
          <Row key={r}>
            <RowHead $wide={r > 8}>{r + 1}</RowHead>
            {row.map((value, c) => (
              <Cell
                key={c}
                $color={columns[c].color}
                $align={r > 0 && columns[c].align ? columns[c].align : 'left'}
                $flag={r > 0 && c === 3}
              >
                {value}
              </Cell>
            ))}
          </Row>
        ))}
      </tbody>
    </Grid>
  </Sheet>
)

const App = () => (
  <>
    <GlobalStyle />
    <Window>
      <TopHeader />
      <RibbonBar />
      <FormulaBar>
        <NameBox>
          <input aria-label="Name box" defaultValue="A5" />
          <Caret size={9} color="#3a3d42" />
        </NameBox>
        <FxArea>
          <i />
          <button aria-label="Insert function">f<sub>x</sub></button>
        </FxArea>
        <FormulaInput aria-label="Formula" defaultValue="Options (up to 5 min)" />
      </FormulaBar>
      <SheetGrid />
      <SheetBar>
        <SheetTabs>
          <SheetNav>
            <PlainButton aria-label="First sheet"><NavIcon end /></PlainButton>
            <PlainButton aria-label="Previous sheet"><NavIcon /></PlainButton>
            <PlainButton aria-label="Next sheet"><NavIcon flip /></PlainButton>
            <PlainButton aria-label="Last sheet"><NavIcon flip end /></PlainButton>
          </SheetNav>
          <SheetTab>Sheet1</SheetTab>
          <PlainButton aria-label="New sheet"><NewSheetIcon /></PlainButton>
        </SheetTabs>
        <ScrollArea>
          <Splitter aria-label="Resize tabs" />
          <PlainButton aria-label="Scroll left"><svg width="22" height="12" viewBox="0 0 22 12"><path d="M13 0v12L7 6z" fill="#3b3f45" /></svg></PlainButton>
          <ScrollTrack>
            <ScrollThumb aria-label="Scroll position"><i /><i /><i /><i /></ScrollThumb>
          </ScrollTrack>
          <PlainButton aria-label="Scroll right"><svg width="10" height="12" viewBox="0 0 10 12"><path d="M2 0v12l6-6z" fill="#3b3f45" /></svg></PlainButton>
        </ScrollArea>
      </SheetBar>
      <StatusBar>
        <Ready>Ready</Ready>
        <Orb />
        <ViewTools>
          <ViewButton $active aria-label="Normal view"><ViewIcon kind="normal" /></ViewButton>
          <ViewButton aria-label="Page layout view"><ViewIcon kind="layout" /></ViewButton>
          <ViewButton aria-label="Page break view"><ViewIcon kind="break" /></ViewButton>
          <Zoom>100%</Zoom>
          <PlainButton aria-label="Zoom out">
            <svg width="22" height="20" viewBox="0 0 22 20"><circle cx="11" cy="10" r="8.500" fill="#f3f4f6" stroke="#81868d" /><path d="M6 9h10v2H6z" fill="#53575d" /></svg>
          </PlainButton>
          <label><ZoomSlider type="range" aria-label="Zoom" defaultValue="50" /></label>
        </ViewTools>
      </StatusBar>
    </Window>
  </>
)

export default App;
